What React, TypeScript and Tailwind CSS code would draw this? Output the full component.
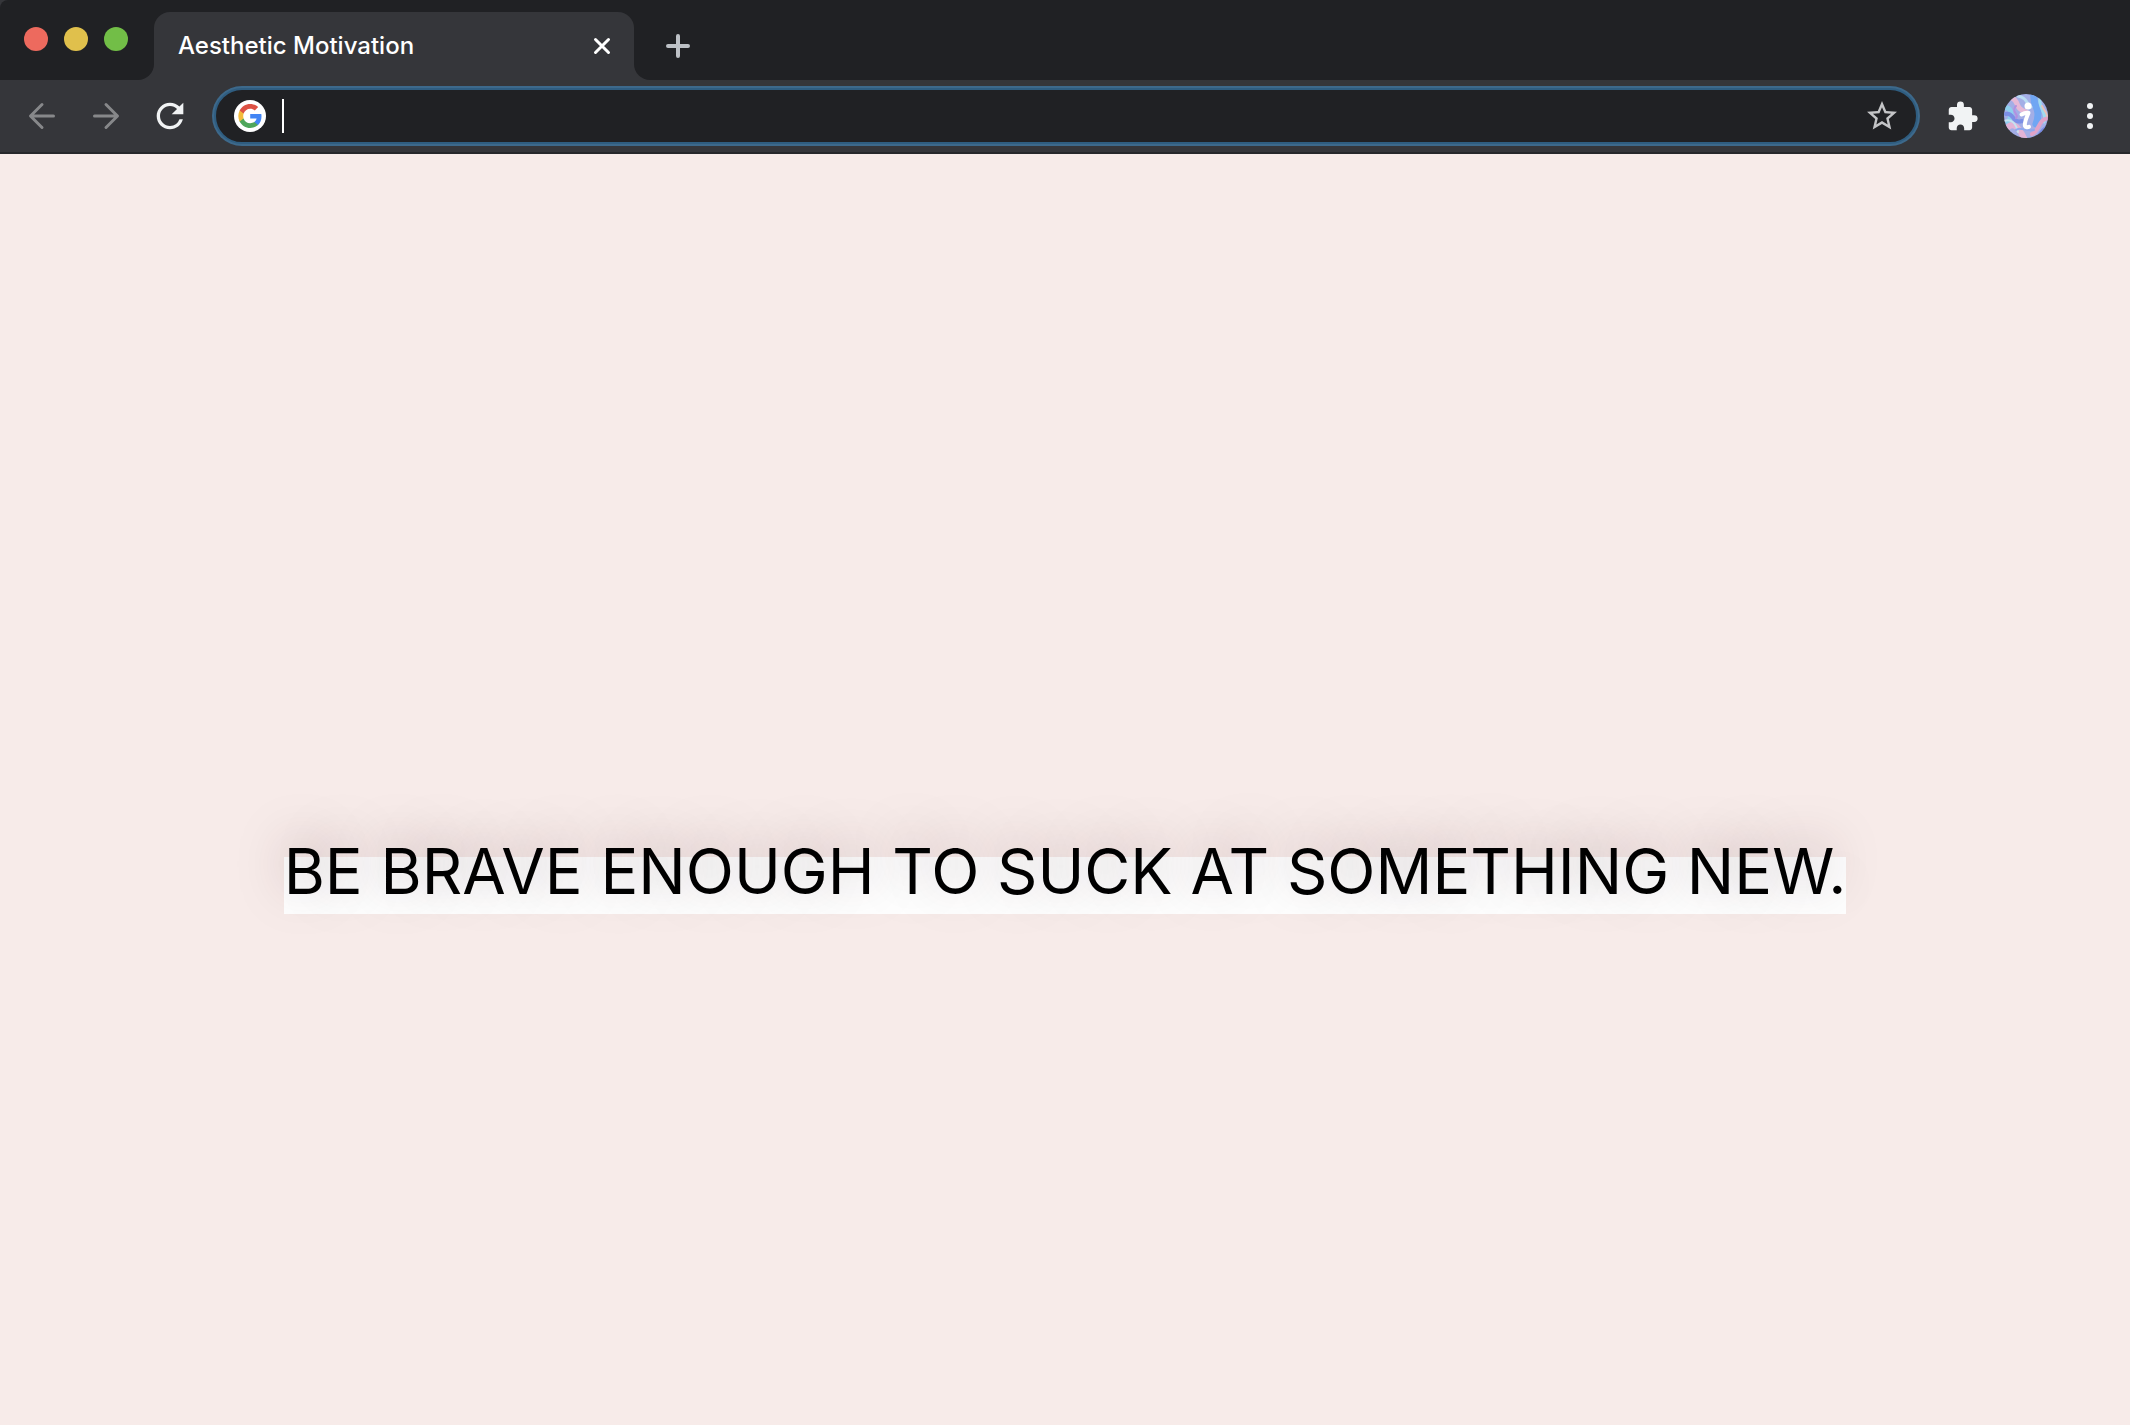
import React from "react";
import { MdExtension, MdRefresh, MdStarBorder } from "react-icons/md";

const strokeProps = {
  fill: "none",
  stroke: "currentColor",
  strokeLinecap: "round" as const,
  strokeLinejoin: "round" as const,
};

function ArrowIcon({ flipped = false }: { flipped?: boolean }) {
  return (
    <svg width="28" height="28" viewBox="0 0 28 28" strokeWidth="3" {...strokeProps}>
      {flipped ? <path d="M2.500 14H25M14 2.500L25.500 14L14 25.500" /> : <path d="M25.500 14H3M14 2.500L2.500 14L14 25.500" />}
    </svg>
  );
}

function CloseIcon() {
  return (
    <svg width="18" height="18" viewBox="0 0 18 18" strokeWidth="3" {...strokeProps}>
      <path d="M2.500 2.500L15.500 15.500M15.500 2.500L2.500 15.500" />
    </svg>
  );
}

function PlusIcon() {
  return (
    <svg width="24" height="24" viewBox="0 0 24 24" strokeWidth="4" {...strokeProps}>
      <path d="M12 2V22M2 12H22" />
    </svg>
  );
}

function GoogleMark() {
  return (
    <svg width="32" height="32" viewBox="0 0 32 32" aria-hidden="true">
      <circle cx="16" cy="16" r="16" fill="#fff" />
      <g transform="translate(4 4)">
        <path fill="#4285f4" d="M23.500 12.300c0-.8-.1-1.600-.2-2.300H12.200v4.500h6.400c-.3 1.500-1.100 2.700-2.400 3.600v3h3.900c2.200-2.100 3.400-5.100 3.400-8.800z" />
        <path fill="#4fa65b" d="M12.200 24c3.200 0 5.900-1.100 7.900-2.900l-3.900-3c-1.100.7-2.400 1.200-4 1.200-3.100 0-5.700-2.100-6.600-4.900h-4v3.100C3.600 21.300 7.600 24 12.200 24z" />
        <path fill="#f3bb3b" d="M5.600 14.400c-.5-1.500-.5-3.200 0-4.800V6.600h-4c-1.700 3.400-1.700 7.500 0 10.900z" />
        <path fill="#dd5144" d="M12.200 4.700c1.700 0 3.300.6 4.600 1.800l3.400-3.400C18 1.100 15.200 0 12.200 0 7.600 0 3.600 2.700 1.600 6.600l4 3c.9-2.800 3.500-4.900 6.600-4.900z" />
      </g>
    </svg>
  );
}

function Avatar() {
  return (
    <svg width="44" height="44" viewBox="0 0 44 44" aria-hidden="true">
      <defs>
        <clipPath id="disc">
          <circle cx="22" cy="22" r="22" />
        </clipPath>
        <filter id="soft" x="-20%" y="-20%" width="140%" height="140%">
          <feGaussianBlur stdDeviation="0.7" />
        </filter>
      </defs>
      <g clipPath="url(#disc)">
        <rect width="44" height="44" fill="#a3aee6" />
        <g filter="url(#soft)" fill="none" strokeLinecap="round">
          <path d="M8 4C16 8 10 14 22 18" stroke="#e6b9d6" strokeWidth="5" />
          <path d="M0 14C6 12 10 20 4 28" stroke="#8fd0ee" strokeWidth="5" />
          <path d="M2 20C10 18 8 30 18 27" stroke="#7c8fe6" strokeWidth="4" />
          <path d="M3 34C10 26 16 36 20 44" stroke="#e3b3d6" strokeWidth="6" />
          <path d="M0 27C8 24 12 30 14 38" stroke="#c6e3f0" strokeWidth="2" />
          <path d="M30 0C28 12 38 14 32 30" stroke="#6fa6f3" strokeWidth="7" />
          <path d="M36 4C34 14 44 20 40 28" stroke="#9edcf0" strokeWidth="3" />
          <path d="M28 40C36 36 34 26 44 24" stroke="#e0a3c8" strokeWidth="4" />
          <path d="M34 42C38 36 40 34 44 32" stroke="#7488e4" strokeWidth="3" />
          <path d="M14 2C24 4 22 10 27 13" stroke="#b9dcf2" strokeWidth="3" />
          <path d="M12 12C6 18 16 20 12 24" stroke="#b390e0" strokeWidth="2" />
          <path d="M38 12C40 17 43 18 43 22" stroke="#e8c3b8" strokeWidth="2" />
          <path d="M12 36C16 32 22 38 30 36" stroke="#8fa8ee" strokeWidth="2" />
        </g>
        <circle cx="24" cy="12" r="3.500" fill="#fff" />
        <path d="M17.500 20.500C20 19 22.500 18.500 24.500 18.800C22.500 24 20 29 21 32C21.600 33.600 24 33.400 25 32.800" fill="none" stroke="#fff" strokeWidth="4" strokeLinecap="round" strokeLinejoin="round" />
      </g>
    </svg>
  );
}

function TabStrip() {
  return (
    <div className="flex h-20 bg-[#35363a]">
      <div className="flex w-[154px] items-start gap-4 rounded-tl-lg rounded-br-2xl bg-[#202124] pt-[27px] pl-6">
        <button aria-label="Close window" className="size-6 rounded-full bg-[#ed6a5e]" />
        <button aria-label="Minimize window" className="size-6 rounded-full bg-[#e0c04c]" />
        <button aria-label="Zoom window" className="size-6 rounded-full bg-[#72be47]" />
      </div>
      <div className="flex w-[480px] bg-[#202124] pt-3">
        <div className="flex flex-1 items-center justify-between rounded-t-2xl bg-[#35363a] pr-[23px] pl-6 text-white">
          <span className="font-['Inter',sans-serif] text-2xl font-medium">Aesthetic Motivation</span>
          <button aria-label="Close tab">
            <CloseIcon />
          </button>
        </div>
      </div>
      <div className="flex flex-1 items-center rounded-bl-2xl bg-[#202124] pt-3 pl-8 text-[#bdc1c6]">
        <button aria-label="New tab">
          <PlusIcon />
        </button>
      </div>
    </div>
  );
}

function Toolbar() {
  return (
    <div className="flex h-[74px] items-center border-b-2 border-[#27282b] bg-[#35363a] pr-6 pl-7">
      <div className="flex w-[184px] items-center">
        <button aria-label="Back" className="mr-9 text-[#87888a]">
          <ArrowIcon />
        </button>
        <button aria-label="Forward" className="mr-[30px] text-[#87888a]">
          <ArrowIcon flipped />
        </button>
        <button aria-label="Reload" className="text-[#f1f3f4]">
          <MdRefresh size={40} />
        </button>
      </div>
      <div className="flex h-[60px] flex-1 rounded-full bg-[#3d698b] p-[2px]">
        <div className="flex flex-1 items-center rounded-full border-2 border-[#2f5d80] bg-[#202124] pr-4 pl-[18px]">
          <GoogleMark />
          <span className="ml-4 h-[34px] w-[2px] bg-white" />
          <input aria-label="Search Google or type a URL" className="min-w-0 flex-1 bg-transparent px-1 text-2xl text-white outline-none" />
          <button aria-label="Bookmark this tab" className="text-[#c4c5c7]">
            <MdStarBorder size={36} />
          </button>
        </div>
      </div>
      <div className="flex items-center pl-[26px] text-[#f1f3f4]">
        <button aria-label="Extensions">
          <MdExtension size={33} />
        </button>
        <button aria-label="Profile" className="ml-[25px]">
          <Avatar />
        </button>
        <button aria-label="Menu" className="ml-[26px]">
          <svg width="32" height="32" viewBox="0 0 32 32" fill="currentColor">
            <circle cx="16" cy="6" r="3" />
            <circle cx="16" cy="16" r="3" />
            <circle cx="16" cy="26" r="3" />
          </svg>
        </button>
      </div>
    </div>
  );
}

export default function App() {
  return (
    <div className="flex min-h-screen flex-col bg-[#f7ebe9]">
      <header>
        <TabStrip />
        <Toolbar />
      </header>
      <main className="flex flex-1 items-center justify-center pt-[164px]">
        <h1 className="bg-linear-to-b from-transparent from-32% to-white to-32% pb-[2px] font-['Inter',sans-serif] text-[63px] leading-[82px] font-normal whitespace-nowrap text-black text-shadow-[0_-7px_50px_rgb(60_30_40/0.35)]">
          BE BRAVE ENOUGH TO SUCK AT SOMETHING NEW.
        </h1>
      </main>
    </div>
  );
}
